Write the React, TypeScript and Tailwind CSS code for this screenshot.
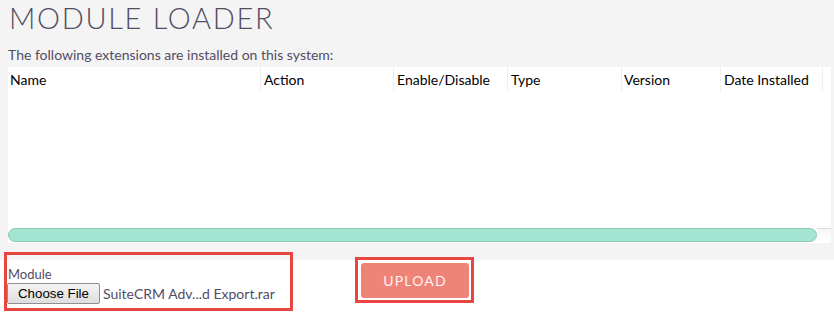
import React from "react";

const cols = [
  { label: "Name", w: "w-[252px]", pl: "pl-[2px]", first: true },
  { label: "Action", w: "w-[133px]", pl: "pl-[3px]" },
  { label: "Enable/Disable", w: "w-[114px]", pl: "pl-[3px]" },
  { label: "Type", w: "w-[114px]", pl: "pl-[3px]" },
  { label: "Version", w: "w-[99px]", pl: "pl-[2px]" },
  { label: "Date Installed", w: "w-[102px]", pl: "pl-[3px]" },
];

export default function App() {
  return (
    <div
      className="relative w-[834px] h-[312px] overflow-hidden bg-[#f4f4f4] text-[#534d64]"
      style={{ fontFamily: "Lato, 'Open Sans', sans-serif" }}
    >
      <h1 className="pl-[9px] pt-[1px] h-[46px] text-[29px] leading-[34px] font-light tracking-[1.7px]">
        MODULE LOADER
      </h1>
      <p className="pl-[8px] h-[21px] text-[14px] leading-[18px]">
        The following extensions are installed on this system:
      </p>
      <div className="ml-[8px] mr-[3px] h-[176px] bg-white flex flex-col">
        <div className="flex h-[24px] text-[14px] leading-[25px] text-black">
          {cols.map((c) => (
            <div
              key={c.label}
              className={`${c.w} ${c.pl} shrink-0 ${c.first ? "" : "border-l border-[#eeeeee]"}`}
            >
              {c.label}
            </div>
          ))}
          <div className="flex-1 border-l border-[#eeeeee]" />
        </div>
        <div className="flex-1" />
        <div className="h-[15px] flex">
          <div className="w-[809px] h-[14px] rounded-full bg-[#a3e4d3] border border-[#8ec9b8]" />
          <div className="flex-1 h-[14px] border-t border-[#dddddd] bg-gradient-to-b from-[#f7f7f7] to-white" />
        </div>
      </div>
      <div className="h-[17px]" />
      <div className="bg-white h-[52px] flex">
        <div className="pl-[8px] pt-[6px] w-[361px]">
          <div className="text-[13px] leading-[16px] h-[17px]">Module</div>
          <div className="flex items-center">
            <div
              className="w-[93px] h-[21px] ml-[-1px] flex items-center justify-center border border-[#8f8f8f] rounded-[2px] bg-gradient-to-b from-[#f4f4f4] to-[#dedede] text-[13.3px] text-black"
              style={{ fontFamily: "'Liberation Sans', Arial, sans-serif" }}
            >
              Choose File
            </div>
            <span className="ml-[3px] text-[14px]">SuiteCRM Adv...d Export.rar</span>
          </div>
        </div>
        <div className="pt-[3px]">
          <div className="w-[108px] h-[35px] rounded-[3px] bg-[#f08377] text-[#fff3f3] flex items-center justify-center text-[14px] tracking-[1.2px]">
            UPLOAD
          </div>
        </div>
      </div>
      <div className="h-[3px] bg-white border-t border-[#eeeeee] flex">
        <div className="w-[353px]" />
        <div className="w-[87px] border-l border-r border-[#eeeeee]" />
        <div className="w-[128px]" />
        <div className="w-[172px] border-l border-r border-[#eeeeee]" />
      </div>

      {/* annotation overlays */}
      <div className="absolute left-[4px] top-[252px] w-[289px] h-[59px] border-[3px] border-[#e8463f]" />
      <div className="absolute left-[355px] top-[257px] w-[119px] h-[46px] border-[3px] border-[#e8463f]" />
    </div>
  );
}
